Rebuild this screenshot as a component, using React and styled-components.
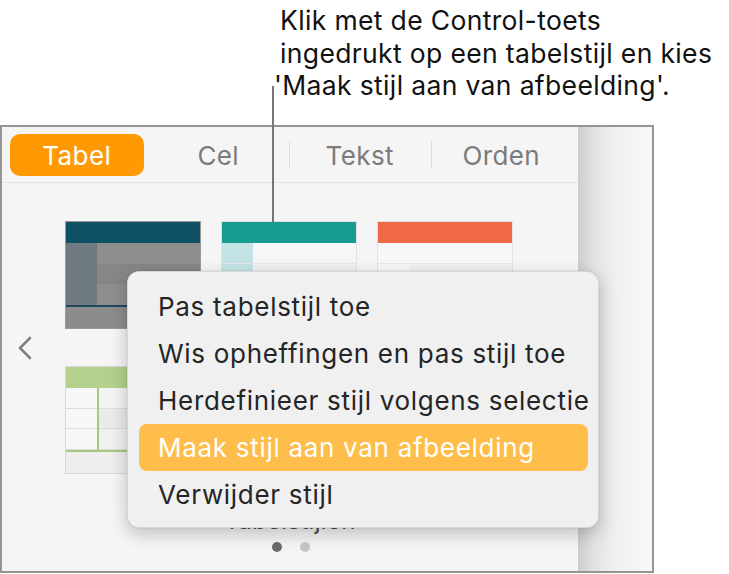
import React from 'react';
import styled, { createGlobalStyle } from 'styled-components';

const GlobalStyle = createGlobalStyle`
  html, body {
    margin: 0;
    padding: 0;
    background: #ffffff;
  }
  body {
    font-family: Inter, "Open Sans", "Liberation Sans", sans-serif;
    -webkit-font-smoothing: antialiased;
  }
`

const Page = styled.div`
  position: relative;
  width: 729px;
  height: 574px;
  overflow: hidden;
  background: #ffffff;
`

const Callout = styled.div`
  height: 125px;
  box-sizing: border-box;
  padding: 4px 0 0 280px;
  font-size: 26.5px;
  line-height: 32.5px;
  color: #111111;
  letter-spacing: 0.35px;
`

const CalloutLine = styled.span`
  display: block;
  white-space: nowrap;
  margin-left: ${p => p.$shift || 0}px;
`

const Leader = styled.div`
  position: absolute;
  left: 272px;
  top: 86px;
  width: 2px;
  height: 136px;
  background: #767676;
`

const Panel = styled.div`
  display: flex;
  width: 654px;
  height: 448px;
  box-sizing: border-box;
  border: 2px solid #959595;
`

const Main = styled.div`
  width: 576px;
  display: flex;
  flex-direction: column;
  background: #f5f5f5;
`

const Side = styled.div`
  flex: 1;
  background: linear-gradient(90deg, #cdcdcd 0%, #e3e3e3 22%, #f1f1f1 55%, #f8f8f8 100%);
`

const TabBar = styled.div`
  display: grid;
  grid-template-columns: repeat(4, 1fr);
  height: 56px;
  box-sizing: border-box;
  padding: 7px 6px 6px 4px;
  border-bottom: 1px solid #e3e3e3;
`

const Tab = styled.div`
  position: relative;
  display: flex;
  align-items: center;
  justify-content: center;
  margin: 0 4px;
  border-radius: 10px;
  font-size: 26px;
  letter-spacing: 0.4px;
  color: ${p => (p.$active ? '#ffffff' : '#7b7b7b')};
  background: ${p => (p.$active ? '#ff9a05' : 'transparent')};

  &::before {
    content: '';
    display: ${p => (p.$sep ? 'block' : 'none')};
    position: absolute;
    left: -4px;
    top: 7px;
    bottom: 7px;
    width: 1px;
    background: #dedede;
  }
`

const Gallery = styled.div`
  display: flex;
  align-items: center;
  padding-top: 38px;
`

const Chevron = styled.div`
  width: 63px;
  box-sizing: border-box;
  padding-left: 15px;
  display: flex;
  color: #808080;
`

const Grid = styled.div`
  display: grid;
  grid-template-columns: repeat(3, 136px);
  grid-auto-rows: 108px;
  column-gap: 20px;
  row-gap: 37px;
`

const Thumb = styled.div`
  display: flex;
  flex-direction: column;
  box-sizing: border-box;
  border: 1px solid ${p => p.$border};
  background: ${p => p.$border};
`

const ThumbHead = styled.div`
  height: 21px;
  background: ${p => p.$bg};
`

const ThumbBody = styled.div`
  display: grid;
  grid-template-columns: 31px 1fr;
  grid-template-rows: repeat(3, 1fr);
  column-gap: ${p => p.$colLine}px;
  height: 62px;
  background: ${p => p.$colColor};
`

const Cell = styled.div`
  background: ${p => p.$bg};
  box-shadow: inset 0 -1px 0 ${p => p.$line};
`

const ThumbRule = styled.div`
  height: 2px;
  background: ${p => p.$bg};
`

const ThumbFoot = styled.div`
  flex: 1;
  background: ${p => p.$bg};
`

const Caption = styled.div`
  margin-top: 33px;
  text-align: center;
  font-size: 24px;
  line-height: 28px;
  letter-spacing: 0.3px;
  color: #4a4a4a;
`

const Dots = styled.div`
  display: flex;
  justify-content: center;
  gap: 18px;
  margin-top: 7px;
  padding-left: 2px;
`

const Dot = styled.span`
  width: 10px;
  height: 10px;
  border-radius: 50%;
  background: ${p => (p.$on ? '#6b6b6b' : '#c6c6c6')};
`

const Menu = styled.div`
  position: absolute;
  left: 127px;
  top: 271px;
  width: 472px;
  height: 257px;
  box-sizing: border-box;
  padding: 11px 10px 0 11px;
  border-radius: 12px;
  background: #f0f0f0;
  border: 1px solid rgba(0, 0, 0, 0.1);
  box-shadow: 0 6px 18px rgba(0, 0, 0, 0.22), 0 0 2px rgba(0, 0, 0, 0.12);
`

const MenuItem = styled.div`
  height: 47px;
  padding-left: 19px;
  border-radius: 8px;
  font-size: 26px;
  letter-spacing: 0.7px;
  line-height: 47px;
  white-space: nowrap;
  color: ${p => (p.$hot ? '#ffffff' : '#252525')};
  background: ${p => (p.$hot ? '#ffbd4b' : 'transparent')};
`

const thumbs = [
  { border: '#9a9a9a', head: '#0e5165', left: '#6f7b80', cells: ['#8e8e8e', '#868686', '#8e8e8e'], line: 'transparent', colLine: 0, colColor: '#6f7b80', rule: '#1d4a5e', foot: '#8c8c8c' },
  { border: '#e2e2e2', head: '#169b8f', left: '#c3e3e6', cells: ['#f6f6f6', '#f1f1f1', '#f6f6f6'], line: '#e6e6e6', colLine: 0, colColor: '#c3e3e6', rule: '#ececec', foot: '#f2f2f2' },
  { border: '#e2e2e2', head: '#ef6a44', left: '#f7f7f7', cells: ['#f7f7f7', '#f1f1f1', '#f7f7f7'], line: '#e6e6e6', colLine: 0, colColor: '#f7f7f7', rule: '#ececec', foot: '#f2f2f2' },
  { border: '#d8d8d8', head: '#b3d18c', left: '#f8f8f8', cells: ['#f3f3f3', '#ebebeb', '#f0f0f0'], line: '#dcdcdc', colLine: 2, colColor: '#a6c97d', rule: '#a6c97d', foot: '#eeeeee' },
  { border: '#d8d8d8', head: '#3d7fc1', left: '#dbe7f3', cells: ['#f6f6f6', '#eeeeee', '#f6f6f6'], line: '#e2e2e2', colLine: 0, colColor: '#dbe7f3', rule: '#3d7fc1', foot: '#f0f0f0' },
  { border: '#d8d8d8', head: '#5a5a5a', left: '#e6e6e6', cells: ['#f6f6f6', '#eeeeee', '#f6f6f6'], line: '#e2e2e2', colLine: 0, colColor: '#e6e6e6', rule: '#5a5a5a', foot: '#f0f0f0' },
];

const menuItems = [
  'Pas tabelstijl toe',
  'Wis opheffingen en pas stijl toe',
  'Herdefinieer stijl volgens selectie',
  'Maak stijl aan van afbeelding',
  'Verwijder stijl',
];

function TableThumb({ t }) {
  return (
    <Thumb $border={t.border}>
      <ThumbHead $bg={t.head} />
      <ThumbBody $colLine={t.colLine} $colColor={t.colColor}>
        {t.cells.map((c, i) => (
          <React.Fragment key={i}>
            <Cell $bg={t.left} $line={t.line} />
            <Cell $bg={c} $line={t.line} />
          </React.Fragment>
        ))}
      </ThumbBody>
      <ThumbRule $bg={t.rule} />
      <ThumbFoot $bg={t.foot} />
    </Thumb>
  );
}

export default function App() {
  return (
    <Page>
      <GlobalStyle />
      <Callout>
        <CalloutLine>Klik met de Control-toets</CalloutLine>
        <CalloutLine>ingedrukt op een tabelstijl en kies</CalloutLine>
        <CalloutLine $shift={-6}>'Maak stijl aan van afbeelding'.</CalloutLine>
      </Callout>

      <Panel>
        <Main>
          <TabBar>
            <Tab $active>Tabel</Tab>
            <Tab>Cel</Tab>
            <Tab $sep>Tekst</Tab>
            <Tab $sep>Orden</Tab>
          </TabBar>

          <Gallery>
            <Chevron>
              <svg width="16" height="24" viewBox="0 0 16 24" fill="none">
                <path d="M13 2 L3 12 L13 22" stroke="currentColor" strokeWidth="2.6" strokeLinecap="round" strokeLinejoin="round" />
              </svg>
            </Chevron>
            <Grid>
              {thumbs.map((t, i) => <TableThumb key={i} t={t} />)}
            </Grid>
          </Gallery>

          <Caption>Tabelstijlen</Caption>
          <Dots>
            <Dot $on />
            <Dot />
          </Dots>
        </Main>
        <Side />
      </Panel>

      <Leader />

      <Menu>
        {menuItems.map((label, i) => (
          <MenuItem key={label} $hot={i === 3}>{label}</MenuItem>
        ))}
      </Menu>
    </Page>
  );
}
